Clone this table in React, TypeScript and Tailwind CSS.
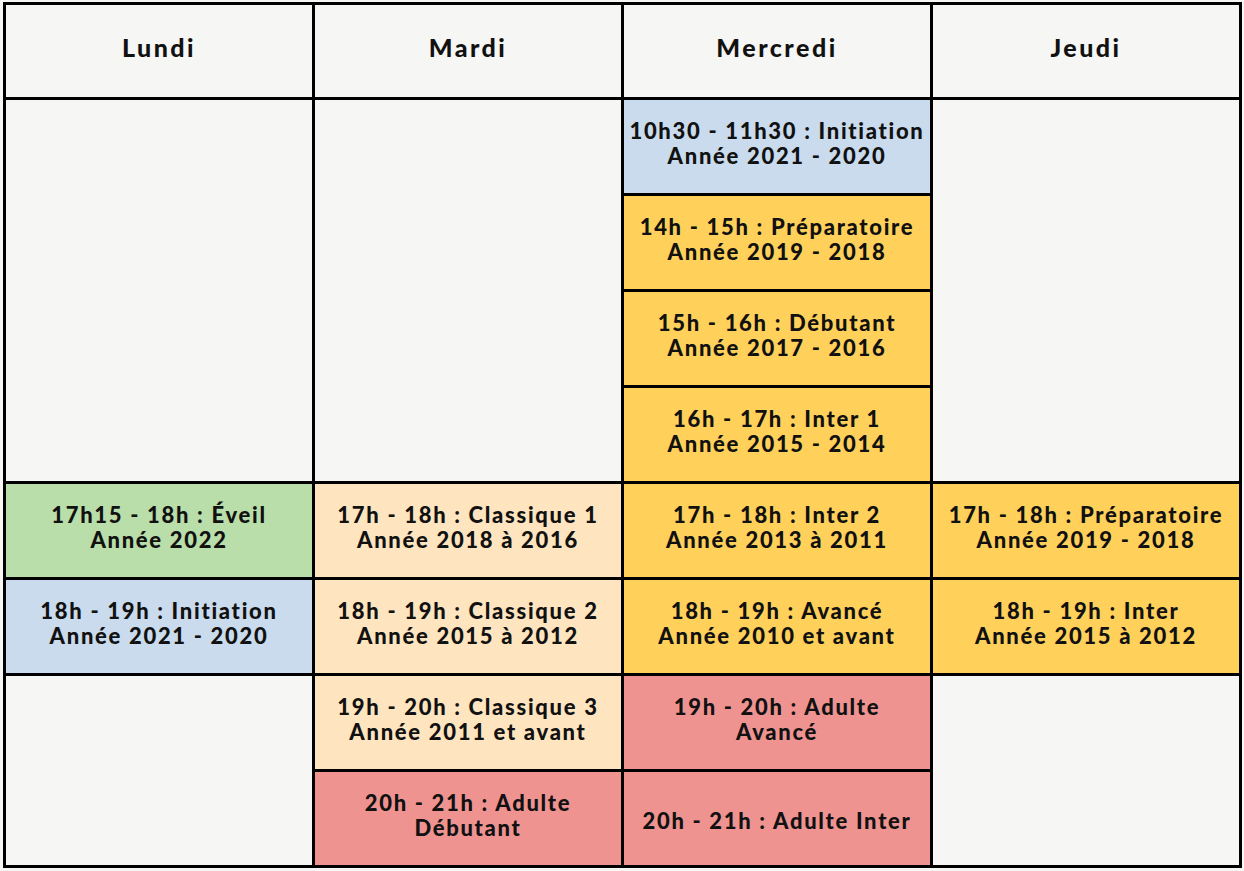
import React from 'react';

type Tone = 'blue' | 'yellow' | 'peach' | 'green' | 'red' | 'empty';

interface Slot {
  col: number;
  row: number;
  span?: number;
  tone: Tone;
  lines?: string[];
}

const toneClass: Record<Tone, string> = {
  blue:   'bg-[#c9dbed]',
  yellow: 'bg-[#ffd05a]',
  peach:  'bg-[#fee5bf]',
  green:  'bg-[#badea9]',
  red:    'bg-[#ef9391]',
  empty:  'bg-[#f6f6f4]',
};

const colStart = ['col-start-1', 'col-start-2', 'col-start-3', 'col-start-4'];
// grid row 1 is the header, so slot row n lands on grid row n + 1
const rowStart = ['row-start-1', 'row-start-2', 'row-start-3', 'row-start-4', 'row-start-5', 'row-start-6', 'row-start-7', 'row-start-8', 'row-start-9'];
const rowSpan  = ['', 'row-span-1', 'row-span-2', 'row-span-3', 'row-span-4'];

const days = ['Lundi', 'Mardi', 'Mercredi', 'Jeudi'];

const slots: Slot[] = [
  // Lundi
  { col: 0, row: 1, span: 4, tone: 'empty' },
  { col: 0, row: 5, tone: 'green',  lines: ['17h15 - 18h : Éveil', 'Année 2022'] },
  { col: 0, row: 6, tone: 'blue',   lines: ['18h - 19h : Initiation', 'Année 2021 - 2020'] },
  { col: 0, row: 7, span: 2, tone: 'empty' },
  // Mardi
  { col: 1, row: 1, span: 4, tone: 'empty' },
  { col: 1, row: 5, tone: 'peach',  lines: ['17h - 18h : Classique 1', 'Année 2018 à 2016'] },
  { col: 1, row: 6, tone: 'peach',  lines: ['18h - 19h : Classique 2', 'Année 2015 à 2012'] },
  { col: 1, row: 7, tone: 'peach',  lines: ['19h - 20h : Classique 3', 'Année 2011 et avant'] },
  { col: 1, row: 8, tone: 'red',    lines: ['20h - 21h : Adulte', 'Débutant'] },
  // Mercredi
  { col: 2, row: 1, tone: 'blue',   lines: ['10h30 - 11h30 : Initiation', 'Année 2021 - 2020'] },
  { col: 2, row: 2, tone: 'yellow', lines: ['14h - 15h : Préparatoire', 'Année 2019 - 2018'] },
  { col: 2, row: 3, tone: 'yellow', lines: ['15h - 16h : Débutant', 'Année 2017 - 2016'] },
  { col: 2, row: 4, tone: 'yellow', lines: ['16h - 17h : Inter 1', 'Année 2015 - 2014'] },
  { col: 2, row: 5, tone: 'yellow', lines: ['17h - 18h : Inter 2', 'Année 2013 à 2011'] },
  { col: 2, row: 6, tone: 'yellow', lines: ['18h - 19h : Avancé', 'Année 2010 et avant'] },
  { col: 2, row: 7, tone: 'red',    lines: ['19h - 20h : Adulte', 'Avancé'] },
  { col: 2, row: 8, tone: 'red',    lines: ['20h - 21h : Adulte Inter'] },
  // Jeudi
  { col: 3, row: 1, span: 4, tone: 'empty' },
  { col: 3, row: 5, tone: 'yellow', lines: ['17h - 18h : Préparatoire', 'Année 2019 - 2018'] },
  { col: 3, row: 6, tone: 'yellow', lines: ['18h - 19h : Inter', 'Année 2015 à 2012'] },
  { col: 3, row: 7, span: 2, tone: 'empty' },
];

export default function App() {
  return (
    <div className="min-h-screen bg-[#f6f6f4] pt-[2px] pl-[3px] font-['Lato','Noto_Sans',sans-serif] text-[#111]">
      <div className="grid w-[1239px] grid-cols-4 grid-rows-[92px_repeat(8,93px)] gap-[3px] border-[3px] border-black bg-black">
        {days.map((d, i) => (
          <div
            key={d}
            className={`${colStart[i]} row-start-1 flex items-center justify-center bg-[#f6f6f4] pb-[6px] text-[25px] font-black tracking-[2.5px]`}
          >
            {d}
          </div>
        ))}
        {slots.map((s, i) => (
          <div
            key={i}
            className={`${colStart[s.col]} ${rowStart[s.row]} ${rowSpan[s.span ?? 1]} ${toneClass[s.tone]} flex flex-col items-center justify-center ${s.lines && s.lines.length > 1 ? 'pb-[7px]' : 'pt-[3px]'} text-center text-[22px] leading-[25px] font-black tracking-[1.7px]`}
          >
            {s.lines?.map((l) => <span key={l}>{l}</span>)}
          </div>
        ))}
      </div>
    </div>
  );
}
